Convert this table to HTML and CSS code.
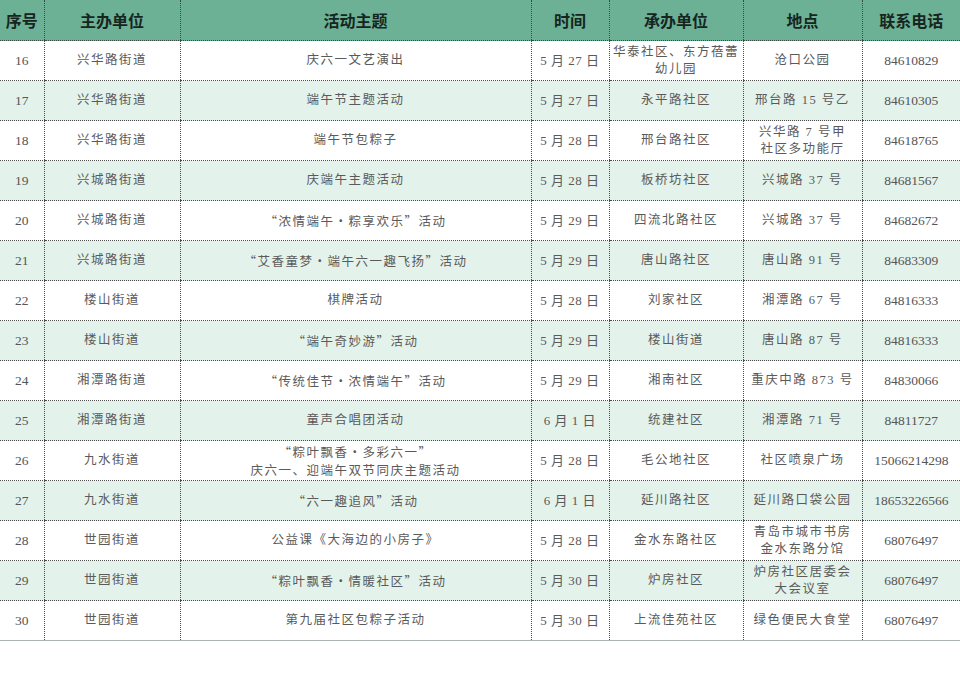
FILE: index.html
```html
<!DOCTYPE html>
<html lang="zh">
<head>
<meta charset="utf-8">
<title>活动表</title>
<link rel="stylesheet" href="styles.css">
</head>
<body>
<table class="schedule">
  <colgroup>
    <col class="c-no"><col class="c-host"><col class="c-theme"><col class="c-time"><col class="c-org"><col class="c-place"><col class="c-tel">
  </colgroup>
  <thead>
    <tr><th>序号</th><th>主办单位</th><th>活动主题</th><th>时间</th><th>承办单位</th><th>地点</th><th>联系电话</th></tr>
  </thead>
  <tbody>
    <tr><td class="num">16</td><td>兴华路街道</td><td>庆六一文艺演出</td><td class="date">5 月 27 日</td><td>华泰社区、东方蓓蕾<br>幼儿园</td><td>沧口公园</td><td class="num">84610829</td></tr>
    <tr class="alt"><td class="num">17</td><td>兴华路街道</td><td>端午节主题活动</td><td class="date">5 月 27 日</td><td>永平路社区</td><td>邢台路 15 号乙</td><td class="num">84610305</td></tr>
    <tr><td class="num">18</td><td>兴华路街道</td><td>端午节包粽子</td><td class="date">5 月 28 日</td><td>邢台路社区</td><td>兴华路 7 号甲<br>社区多功能厅</td><td class="num">84618765</td></tr>
    <tr class="alt"><td class="num">19</td><td>兴城路街道</td><td>庆端午主题活动</td><td class="date">5 月 28 日</td><td>板桥坊社区</td><td>兴城路 37 号</td><td class="num">84681567</td></tr>
    <tr><td class="num">20</td><td>兴城路街道</td><td class="cjk">“浓情端午·粽享欢乐”活动</td><td class="date">5 月 29 日</td><td>四流北路社区</td><td>兴城路 37 号</td><td class="num">84682672</td></tr>
    <tr class="alt"><td class="num">21</td><td>兴城路街道</td><td class="cjk">“艾香童梦·端午六一趣飞扬”活动</td><td class="date">5 月 29 日</td><td>唐山路社区</td><td>唐山路 91 号</td><td class="num">84683309</td></tr>
    <tr><td class="num">22</td><td>楼山街道</td><td>棋牌活动</td><td class="date">5 月 28 日</td><td>刘家社区</td><td>湘潭路 67 号</td><td class="num">84816333</td></tr>
    <tr class="alt"><td class="num">23</td><td>楼山街道</td><td class="cjk">“端午奇妙游”活动</td><td class="date">5 月 29 日</td><td>楼山街道</td><td>唐山路 87 号</td><td class="num">84816333</td></tr>
    <tr><td class="num">24</td><td>湘潭路街道</td><td class="cjk">“传统佳节·浓情端午”活动</td><td class="date">5 月 29 日</td><td>湘南社区</td><td>重庆中路 873 号</td><td class="num">84830066</td></tr>
    <tr class="alt"><td class="num">25</td><td>湘潭路街道</td><td>童声合唱团活动</td><td class="date">6 月 1 日</td><td>统建社区</td><td>湘潭路 71 号</td><td class="num">84811727</td></tr>
    <tr><td class="num">26</td><td>九水街道</td><td class="cjk two">“粽叶飘香·多彩六一”<br>庆六一、迎端午双节同庆主题活动</td><td class="date">5 月 28 日</td><td>毛公地社区</td><td>社区喷泉广场</td><td class="num">15066214298</td></tr>
    <tr class="alt"><td class="num">27</td><td>九水街道</td><td class="cjk">“六一趣追风”活动</td><td class="date">6 月 1 日</td><td>延川路社区</td><td>延川路口袋公园</td><td class="num">18653226566</td></tr>
    <tr><td class="num">28</td><td>世园街道</td><td>公益课《大海边的小房子》</td><td class="date">5 月 28 日</td><td>金水东路社区</td><td>青岛市城市书房<br>金水东路分馆</td><td class="num">68076497</td></tr>
    <tr class="alt"><td class="num">29</td><td>世园街道</td><td class="cjk">“粽叶飘香·情暖社区”活动</td><td class="date">5 月 30 日</td><td>炉房社区</td><td>炉房社区居委会<br>大会议室</td><td class="num">68076497</td></tr>
    <tr class="last"><td class="num">30</td><td>世园街道</td><td>第九届社区包粽子活动</td><td class="date">5 月 30 日</td><td>上流佳苑社区</td><td>绿色便民大食堂</td><td class="num">68076497</td></tr>
  </tbody>
</table>
</body>
</html>
```

FILE: styles.css
```css
html, body {
  margin: 0;
  padding: 0;
  background: #ffffff;
}

.schedule {
  width: 960px;
  border-collapse: collapse;
  table-layout: fixed;
  font-family: "Liberation Serif", "Noto Sans CJK SC", serif;
}

.c-no { width: 44px; }
.c-host { width: 136px; }
.c-theme { width: 351px; }
.c-time { width: 78px; }
.c-org { width: 134px; }
.c-place { width: 119px; }
.c-tel { width: 98px; }

.schedule th {
  height: 40px;
  padding: 0;
  background: #6cb096;
  color: #16261e;
  font-family: "Noto Sans CJK SC", sans-serif;
  font-weight: 700;
  font-size: 16px;
  text-align: center;
  vertical-align: middle;
  border-left: 1px dotted #3d4a44;
  border-bottom: 1px dotted #3d4a44;
}

.schedule th:first-child,
.schedule td:first-child {
  border-left: none;
}

.schedule td {
  height: 39px;
  padding: 0;
  color: #5a5a5a;
  font-size: 12.5px;
  letter-spacing: 1.5px;
  line-height: 17px;
  text-align: center;
  vertical-align: middle;
  border-left: 1px dotted #4a4a4a;
  border-bottom: 1px dotted #4a4a4a;
}

.schedule td.cjk {
  font-family: "Noto Sans CJK SC", sans-serif;
}

.schedule td.two {
  line-height: 18px;
}

.schedule tr.alt td {
  background: #e3f2ea;
}

.schedule tr.last td {
  border-bottom: 1px solid #a9b5b0;
}

.schedule td.num {
  font-size: 13.5px;
  letter-spacing: 0;
  color: #555555;
}

.schedule td.date {
  font-size: 13px;
  letter-spacing: 0.5px;
}
```
